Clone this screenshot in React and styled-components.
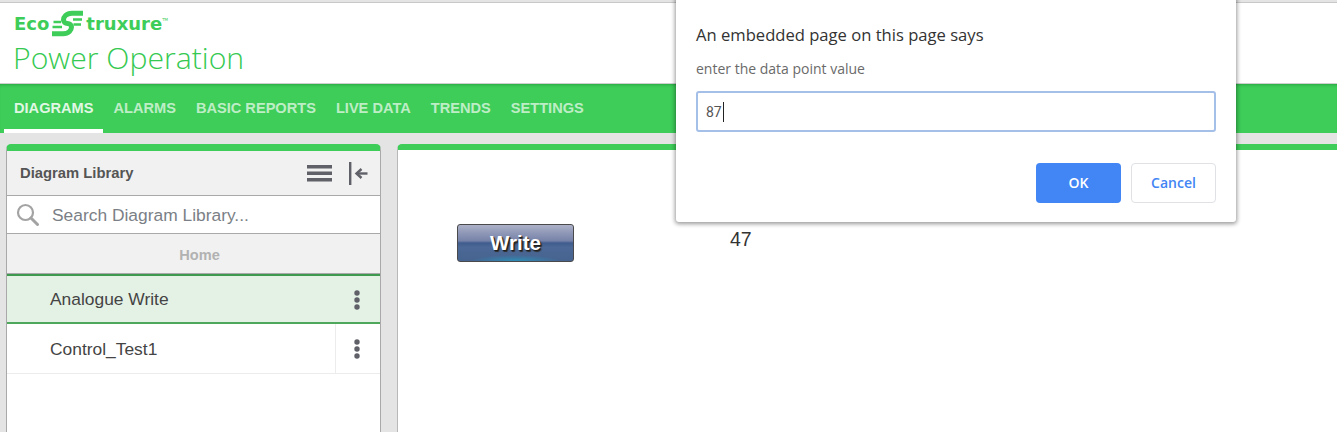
import React from "react";
import styled, { createGlobalStyle } from "styled-components";

const Global = createGlobalStyle`
  html, body { margin: 0; padding: 0; background: #e4e4e4; }
  body { font-family: "Liberation Sans", Arial, sans-serif; overflow: hidden; }
  #root { width: 1337px; height: 432px; overflow: hidden; }
  * { box-sizing: border-box; }
`;

const Page = styled.div`
  position: relative;
  width: 1337px;
  height: 432px;
  display: flex;
  flex-direction: column;
  overflow: hidden;
  background: #e4e4e4;
  padding-top: 2px;
`;
const Header = styled.header`
  height: 82px;
  flex: none;
  background: #fff;
  border-top: 1px solid #c8c8c8;
  border-bottom: 1px solid #cfcfcf;
  padding: 6px 0 0 14px;
`;
const LogoRow = styled.div`
  display: flex;
  align-items: center;
  height: 28px;
  font: 700 18px/28px "DejaVu Sans", sans-serif;
  color: #3dcd58;
`;
const LogoWord = styled.span`
  display: block;
  padding-top: 2px;
`;
const Tm = styled.span`
  font-size: 4px;
  font-weight: 400;
  align-self: flex-start;
  margin: 5px 0 0 0;
  line-height: 12px;
`;
const Product = styled.div`
  font: 300 30.2px/36px "Open Sans", sans-serif;
  color: #35c951;
  margin-top: 3px;
  margin-left: -1px;
  white-space: nowrap;
`;
const Nav = styled.nav`
  height: 49px;
  flex: none;
  background: #3dcd58;
  display: flex;
  padding-left: 4px;
  box-shadow: inset 0 3px 3px -2px rgba(0, 90, 30, 0.35);
`;
const NavItem = styled.div`
  height: 49px;
  padding: 0 10px;
  font: 700 14.6px/49px "Liberation Sans", Arial, sans-serif;
  color: ${(p) => (p.$active ? "rgba(255,255,255,.86)" : "rgba(255,255,255,.68)")};
  border-bottom: 4px solid ${(p) => (p.$active ? "#fff" : "transparent")};
  white-space: nowrap;
`;
const Body = styled.main`
  flex: 1;
  display: flex;
  padding: 11px 0 0 6px;
  gap: 16px;
  min-height: 0;
`;
const Library = styled.aside`
  width: 375px;
  flex: none;
  height: 300px;
  background: #fff;
  border: 1px solid #a9a9a9;
  border-top: 7px solid #3dcd58;
  border-radius: 5px 5px 0 0;
  display: flex;
  flex-direction: column;
`;
const LibraryHead = styled.div`
  height: 45px;
  flex: none;
  background: #f1f1f1;
  border-bottom: 1px solid #a9a9a9;
  display: flex;
  align-items: center;
  padding: 0 12px 0 13px;
  font: 700 14.8px/1 "Liberation Sans", Arial, sans-serif;
  color: #555;
`;
const HeadTitle = styled.span`
  flex: 1;
`;
const HeadIcons = styled.div`
  display: flex;
  align-items: center;
  gap: 17px;
`;
const SearchRow = styled.div`
  height: 38px;
  flex: none;
  display: flex;
  align-items: center;
  padding-left: 9px;
  gap: 13px;
  background: #fff;
  border-bottom: 1px solid #a9a9a9;
  font: 400 17.4px/1 "Liberation Sans", Arial, sans-serif;
  color: #7b7f86;
`;
const SearchText = styled.span`
  padding-top: 2px;
`;
const Crumb = styled.div`
  height: 40px;
  flex: none;
  background: #f1f1f1;
  border-bottom: 1px solid #a9a9a9;
  padding: 1px 0 0 12px;
  text-align: center;
  font: 700 14.6px/40px "Liberation Sans", Arial, sans-serif;
  color: #b2b2b2;
`;
const Row = styled.div`
  height: 50px;
  flex: none;
  display: flex;
  align-items: stretch;
  background: ${(p) => (p.$selected ? "#e4f2e6" : "#fff")};
  border-top: ${(p) => (p.$selected ? "2px solid #3f9a4f" : "0")};
  border-bottom: ${(p) => (p.$selected ? "2px solid #4fa75c" : "1px solid #ececec")};
  font: 400 17.4px/1 "Liberation Sans", Arial, sans-serif;
  color: #444;
`;
const RowLabel = styled.div`
  flex: 1;
  display: flex;
  align-items: center;
  padding: 2px 0 0 43px;
`;
const RowMenu = styled.div`
  width: 45px;
  flex: none;
  display: flex;
  align-items: center;
  justify-content: center;
  padding: 1px 2px 0 0;
  border-left: 1px solid ${(p) => (p.$selected ? "transparent" : "#ececec")};
`;
const Canvas = styled.section`
  position: relative;
  flex: 1;
  height: 300px;
  background: #fff;
  border-left: 1px solid #b8b8b8;
  border-top: 6px solid #3dcd58;
  border-radius: 5px 0 0 0;
`;
const WriteButton = styled.div`
  position: absolute;
  left: 59px;
  top: 74px;
  width: 117px;
  height: 38px;
  padding-top: 1px;
  border: 1.5px solid #4a4a4c;
  border-radius: 3px;
  background:
    radial-gradient(ellipse 45px 6px at 50% 100%, #2e8db5 0%, rgba(46, 141, 181, 0) 100%),
    linear-gradient(180deg, #adb2c8 0%, #929ab9 20%, #7682a8 44%, #3f5c8e 50%, #4b6896 62%, #47638f 100%);
  display: flex;
  align-items: center;
  justify-content: center;
  font: 700 20.5px/1 "Liberation Sans", Arial, sans-serif;
  color: #fff;
  text-shadow: 1px 1px 1px #1c1c1c, 1.5px 1.5px 1px #333;
`;
const PointValue = styled.div`
  position: absolute;
  left: 332px;
  top: 78px;
  font: 400 19.5px/22px "Liberation Sans", Arial, sans-serif;
  color: #333;
`;
const Dialog = styled.div`
  position: absolute;
  left: 676px;
  top: -4px;
  width: 560px;
  height: 226px;
  background: #fff;
  border-radius: 0 0 3px 3px;
  box-shadow: 0 1px 4px 1px rgba(0, 0, 0, 0.4);
  padding: 28px 20px 0;
`;
const DialogTitle = styled.div`
  font: 400 16.6px/22px "Open Sans", sans-serif;
  color: #333;
  margin-bottom: 13px;
`;
const DialogText = styled.div`
  font: 400 14px/20px "Open Sans", sans-serif;
  color: #6a6a6a;
  margin-bottom: 12px;
`;
const PromptInput = styled.div`
  height: 41px;
  border: 2px solid #a4bfe8;
  border-radius: 3px;
  background: #fff;
  padding-left: 8px;
  display: flex;
  align-items: center;
  font: 400 14px/1 "Roboto", sans-serif;
  color: #555;
`;
const Caret = styled.span`
  display: inline-block;
  width: 1px;
  height: 20px;
  background: #222;
  margin-left: 1px;
`;
const DialogActions = styled.div`
  display: flex;
  justify-content: flex-end;
  gap: 10px;
  margin-top: 31px;
`;
const DialogButton = styled.div`
  width: 85px;
  height: 40px;
  border-radius: 4px;
  background: ${(p) => (p.$primary ? "#4285f4" : "#fff")};
  border: ${(p) => (p.$primary ? "0" : "1px solid #dfe1e5")};
  color: ${(p) => (p.$primary ? "#fff" : "#4285f4")};
  font: 600 14px/1 "Open Sans", sans-serif;
  display: flex;
  align-items: center;
  justify-content: center;
`;

const LogoMark = () => (
  <svg width="31" height="27" viewBox="0 0 31 27" style={{ margin: "0 3px 0 3px", flex: "none" }} aria-hidden="true">
    <path
      d="M31 3.200H20C14 3.200 11.500 7 11.500 10C11.500 12 13 13.500 15.500 13.500C18 13.500 19.500 15 19.500 17C19.500 20 17 23.800 11 23.800H0"
      fill="none"
      stroke="#3dcd58"
      strokeWidth="5"
    />
    <path d="M1.500 12H9M0.500 17H10" stroke="#3dcd58" strokeWidth="2.600" fill="none" />
    <path d="M21 9.500H30M21.500 14.500H29" stroke="#3dcd58" strokeWidth="2.600" fill="none" />
  </svg>
);

const MenuIcon = () => (
  <svg width="25" height="18" viewBox="0 0 25 18" aria-hidden="true">
    <rect x="0" y="1" width="25" height="3.500" fill="#5f6068" />
    <rect x="0" y="7.500" width="25" height="3.500" fill="#5f6068" />
    <rect x="0" y="14" width="25" height="3.500" fill="#5f6068" />
  </svg>
);
const CollapseIcon = () => (
  <svg width="19" height="23" viewBox="0 0 19 23" aria-hidden="true">
    <rect x="0" y="0" width="2.400" height="23" fill="#5f6068" />
    <path d="M18.500 11.500H8.500" stroke="#5f6068" strokeWidth="2.400" fill="none" />
    <path d="M12.500 7 7.500 11.500 12.500 16" stroke="#5f6068" strokeWidth="2.400" fill="none" />
  </svg>
);
const SearchIcon = () => (
  <svg width="23" height="23" viewBox="0 0 23 23" style={{ flex: "none" }} aria-hidden="true">
    <circle cx="9.500" cy="9.500" r="7.500" fill="none" stroke="#a3a3a3" strokeWidth="2.200" />
    <path d="M15 15l6.500 6.500" stroke="#a3a3a3" strokeWidth="3" strokeLinecap="round" />
  </svg>
);
const Dots = () => (
  <svg width="6" height="20" viewBox="0 0 6 20" aria-hidden="true">
    <circle cx="3" cy="3" r="2.700" fill="#5f6068" />
    <circle cx="3" cy="10" r="2.700" fill="#5f6068" />
    <circle cx="3" cy="17" r="2.700" fill="#5f6068" />
  </svg>
);

const navItems = ["DIAGRAMS", "ALARMS", "BASIC REPORTS", "LIVE DATA", "TRENDS", "SETTINGS"];

export default function App() {
  return (
    <Page>
      <Global />
      <Header>
        <LogoRow>
          <LogoWord>Eco</LogoWord>
          <LogoMark />
          <LogoWord>truxure</LogoWord>
          <Tm>TM</Tm>
        </LogoRow>
        <Product>Power Operation</Product>
      </Header>
      <Nav>
        {navItems.map((n, i) => (
          <NavItem key={n} $active={i === 0}>{n}</NavItem>
        ))}
      </Nav>
      <Body>
        <Library>
          <LibraryHead>
            <HeadTitle>Diagram Library</HeadTitle>
            <HeadIcons>
              <MenuIcon />
              <CollapseIcon />
            </HeadIcons>
          </LibraryHead>
          <SearchRow>
            <SearchIcon />
            <SearchText>Search Diagram Library...</SearchText>
          </SearchRow>
          <Crumb>Home</Crumb>
          <Row $selected>
            <RowLabel>Analogue Write</RowLabel>
            <RowMenu $selected><Dots /></RowMenu>
          </Row>
          <Row>
            <RowLabel>Control_Test1</RowLabel>
            <RowMenu><Dots /></RowMenu>
          </Row>
        </Library>
        <Canvas>
          <WriteButton>Write</WriteButton>
          <PointValue>47</PointValue>
        </Canvas>
      </Body>
      <Dialog>
        <DialogTitle>An embedded page on this page says</DialogTitle>
        <DialogText>enter the data point value</DialogText>
        <PromptInput>87<Caret /></PromptInput>
        <DialogActions>
          <DialogButton $primary>OK</DialogButton>
          <DialogButton>Cancel</DialogButton>
        </DialogActions>
      </Dialog>
    </Page>
  );
}
